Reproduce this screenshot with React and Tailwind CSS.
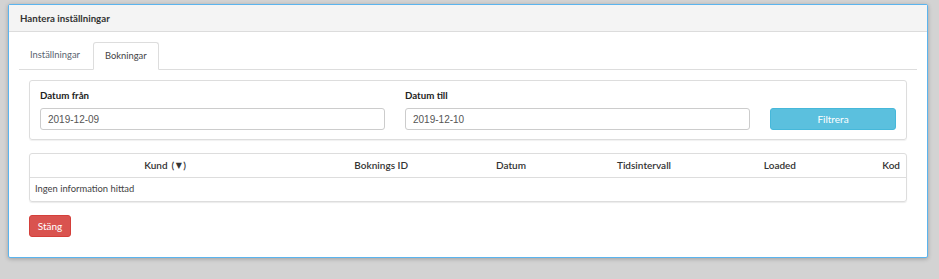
export default function App() {
  const cols = [
    { label: "Kund", w: "w-[162px]", arrow: true },
    { label: "Boknings ID", w: "w-[222px]" },
    { label: "Datum", w: "w-[118px]" },
    { label: "Tidsintervall", w: "w-[145px]" },
    { label: "Loaded", w: "w-[125px]" },
    { label: "Kod", w: "flex-1" },
  ];
  return (
    <div className="w-[939px] h-[279px] bg-[#d3d3d3] pt-[4px] pl-[8px] font-['Lato',sans-serif] text-[#333]">
      <div className="w-[920px] h-[254px] bg-white border border-[#5bb4ee] shadow-[0_1px_4px_rgba(0,0,0,0.25)] rounded-[2px] flex flex-col">
        <div className="h-[27px] bg-[#f4f4f4] border-b border-[#dcdcdc] px-[11px] flex items-center">
          <span className="text-[9.7px] font-bold text-[#333]">Hantera inställningar</span>
        </div>
        <div className="pl-[10px] pr-[10px] pt-[10px]">
          <div className="flex border-b border-[#dddddd] h-[28px] items-end">
            <div className="h-[27px] px-[11px] flex items-center text-[9.4px] text-[#5a6470] mr-[2px]">Inställningar</div>
            <div className="h-[28px] px-[11px] flex items-center text-[9.4px] text-[#444] bg-white border border-[#dddddd] border-b-white rounded-t-[3px] -mb-px">Bokningar</div>
          </div>
          <div className="px-[10px] pt-[10px]">
            <div className="border border-[#dddddd] rounded-[3px] shadow-[0_1px_1px_rgba(0,0,0,0.06)] px-[10px] pt-[8px] pb-[9px] flex items-end gap-[20px]">
              <div className="w-[345px] flex flex-col">
                <label className="text-[9.7px] font-bold text-[#222] leading-[13px] mb-[6px]">Datum från</label>
                <div className="h-[22px] border border-[#cccccc] rounded-[3px] px-[7px] flex items-center text-[10px] font-['Liberation_Sans',sans-serif] text-[#555]">2019-12-09</div>
              </div>
              <div className="w-[345px] flex flex-col">
                <label className="text-[9.7px] font-bold text-[#222] leading-[13px] mb-[6px]">Datum till</label>
                <div className="h-[22px] border border-[#cccccc] rounded-[3px] px-[7px] flex items-center text-[10px] font-['Liberation_Sans',sans-serif] text-[#555]">2019-12-10</div>
              </div>
              <div className="w-[126px] h-[22px] bg-[#5bc0de] border border-[#46b8da] rounded-[3px] flex items-center justify-center text-[10px] text-white">Filtrera</div>
            </div>
            <div className="mt-[13px] border border-[#dddddd] rounded-[3px] shadow-[0_1px_1px_rgba(0,0,0,0.08)]">
              <div className="flex h-[24px] border-b border-[#dddddd] items-center">
                {cols.map((c) => (
                  <div key={c.label} className={`${c.w} flex justify-end items-center pr-[6px] text-[10px] font-semibold text-[#333]`}>
                    <span>{c.label}</span>
                    {c.arrow && (
                      <span className="flex items-center ml-[4px]">
                        <span>(</span>
                        <span className="inline-flex w-[9px] justify-center text-[8px] font-['DejaVu_Sans',sans-serif]">▼</span>
                        <span>)</span>
                      </span>
                    )}
                  </div>
                ))}
              </div>
              <div className="h-[23px] flex items-center px-[5px] text-[9.4px] text-[#444]">Ingen information hittad</div>
            </div>
            <div className="mt-[13px] flex">
              <div className="flex w-[42px] h-[22px] bg-[#d9534f] border border-[#d43f3a] rounded-[3px] items-center justify-center text-[10px] text-white">Stäng</div>
            </div>
          </div>
        </div>
      </div>
    </div>
  );
}
